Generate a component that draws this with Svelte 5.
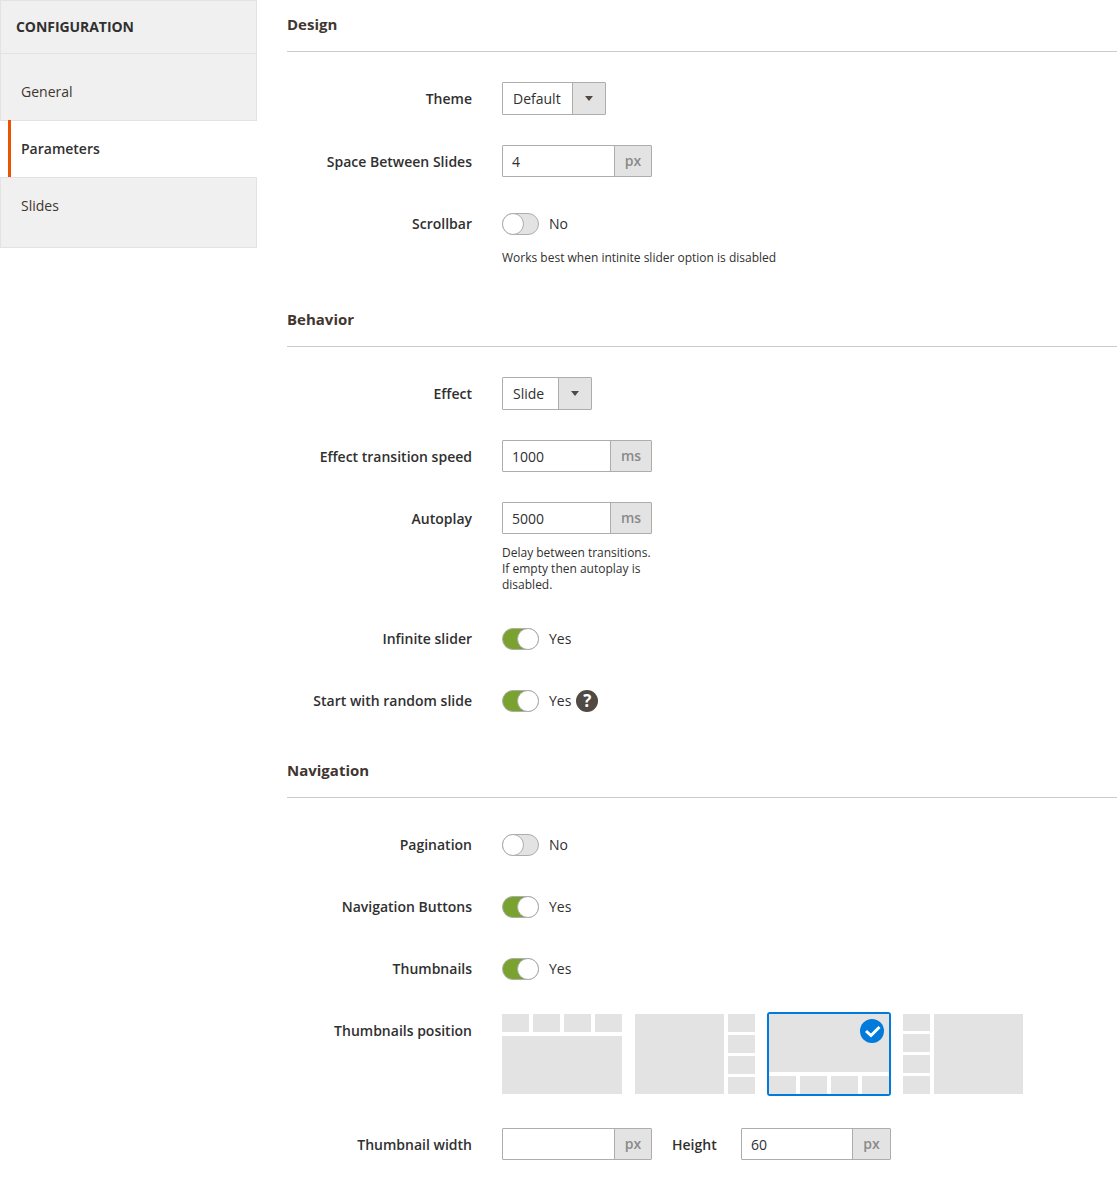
<script lang="ts">
    const thumbLayouts = ['top', 'right', 'bottom', 'left'];
    const selected = 'bottom';
    const items = [1, 2, 3, 4];
</script>

{#snippet toggle(on: boolean, help = false)}
    <div class="toggle-wrap">
        <span class="toggle" class:on><span class="knob"></span></span>
        <span class="toggle-label">{on ? 'Yes' : 'No'}</span>
        {#if help}<span class="help">?</span>{/if}
    </div>
{/snippet}

{#snippet select(value: string, cls: string)}
    <div class="select {cls}">
        <span class="select-value">{value}</span>
        <span class="select-btn"><span class="arrow"></span></span>
    </div>
{/snippet}

{#snippet addon(value: string, unit: string, cls = '')}
    <div class="addon {cls}">
        <input type="text" {value} />
        <span class="unit">{unit}</span>
    </div>
{/snippet}

<div class="page">
    <aside class="side">
        <div class="side-head">CONFIGURATION</div>
        <div class="tab first">General</div>
        <div class="tab active">Parameters</div>
        <div class="tab last">Slides</div>
    </aside>

    <main class="main">
        <section>
            <h2>Design</h2>
            <div class="row">
                <div class="label">Theme</div>
                <div class="ctrl">{@render select('Default', 'w-theme')}</div>
            </div>
            <div class="row">
                <div class="label">Space Between Slides</div>
                <div class="ctrl">{@render addon('4', 'px')}</div>
            </div>
            <div class="row">
                <div class="label">Scrollbar</div>
                <div class="ctrl">
                    {@render toggle(false)}
                    <div class="note nowrap">Works best when intinite slider option is disabled</div>
                </div>
            </div>
        </section>

        <section>
            <h2>Behavior</h2>
            <div class="row">
                <div class="label">Effect</div>
                <div class="ctrl">{@render select('Slide', 'w-effect')}</div>
            </div>
            <div class="row">
                <div class="label">Effect transition speed</div>
                <div class="ctrl">{@render addon('1000', 'ms', 'ms')}</div>
            </div>
            <div class="row">
                <div class="label">Autoplay</div>
                <div class="ctrl">
                    {@render addon('5000', 'ms', 'ms')}
                    <div class="note">Delay between transitions. If empty then autoplay is disabled.</div>
                </div>
            </div>
            <div class="row">
                <div class="label">Infinite slider</div>
                <div class="ctrl">{@render toggle(true)}</div>
            </div>
            <div class="row">
                <div class="label">Start with random slide</div>
                <div class="ctrl">{@render toggle(true, true)}</div>
            </div>
        </section>

        <section>
            <h2>Navigation</h2>
            <div class="row">
                <div class="label">Pagination</div>
                <div class="ctrl">{@render toggle(false)}</div>
            </div>
            <div class="row">
                <div class="label">Navigation Buttons</div>
                <div class="ctrl">{@render toggle(true)}</div>
            </div>
            <div class="row">
                <div class="label">Thumbnails</div>
                <div class="ctrl">{@render toggle(true)}</div>
            </div>
            <div class="row thumbs-row">
                <div class="label">Thumbnails position</div>
                <div class="ctrl thumbs">
                    {#each thumbLayouts as t}
                        <div class="thumb {t}" class:selected={t === selected}>
                            <div class="big"></div>
                            <div class="small">
                                {#each items as i}<span data-i={i}></span>{/each}
                            </div>
                            {#if t === selected}
                                <span class="check">
                                    <svg viewBox="0 0 24 24" width="24" height="24" aria-hidden="true">
                                        <path d="M6 12l5 4.500 8.500-8.500" fill="none" stroke="#fff" stroke-width="3"/>
                                    </svg>
                                </span>
                            {/if}
                        </div>
                    {/each}
                </div>
            </div>
            <div class="row">
                <div class="label">Thumbnail width</div>
                <div class="ctrl size">
                    {@render addon('', 'px')}
                    <div class="inline-label">Height</div>
                    {@render addon('60', 'px', 'wide')}
                </div>
            </div>
        </section>
    </main>
</div>

<style>
    :global(body){
        background:#fff;
        font-family:"Open Sans", sans-serif;
        font-size:14px;
        color:#303030;
    }

    .page{ display:flex; width:1117px; height:1198px; overflow:hidden; }

    /* sidebar */
    .side{ flex:0 0 257px; width:257px; }
    .side-head{
        height:52px; line-height:51px; padding-left:15px;
        background:#f0f0f0; border:1px solid #e3e3e3;
        font-weight:700; color:#303030; letter-spacing:-.06px;
    }
    .tab{
        background:#f0f0f0; border-right:1px solid #e3e3e3; border-left:1px solid #e3e3e3;
        padding-left:20px; color:#41362f;
    }
    .tab.first{ box-sizing:border-box; height:67px; line-height:76px; border-bottom:1px solid #e3e3e3; }
    .tab.active{
        position:relative; box-sizing:border-box;
        height:57px; line-height:58px; background:#fff; margin:-1px 0 0 8px;
        border:0; border-left:3px solid #eb5202; padding-left:10px;
        box-shadow:inset 0 1px 0 #e3e3e3;
        font-weight:600; color:#303030;
    }
    .tab.last{
        box-sizing:border-box; height:71px; line-height:56px;
        border-top:1px solid #e3e3e3; border-bottom:1px solid #e3e3e3;
    }

    /* content */
    .main{ flex:1; padding-left:30px; min-width:0; }
    h2{
        margin:0 0 30px; height:51px; line-height:49px;
        border-bottom:1px solid #cccccc;
        font-size:15px; font-weight:700; color:#41362f;
    }
    .row{ display:flex; margin-bottom:30px; }
    .label{
        width:185px; margin-right:30px; padding-top:7px;
        line-height:20px; text-align:right; font-weight:600; color:#303030;
    }
    .ctrl{ min-height:32px; }

    .select{
        display:flex; box-sizing:border-box; height:33px;
        border:1px solid #adadad; border-radius:1px; background:#fff;
    }
    .w-theme{ width:104px; }
    .w-effect{ width:90px; }
    .select-value{ flex:1; padding-left:10px; line-height:32px; }
    .select-btn{
        flex:0 0 32px; display:grid; place-items:center;
        background:#e3e3e3; border-left:1px solid #adadad;
    }
    .arrow{
        width:0; height:0;
        border-left:4px solid transparent; border-right:4px solid transparent;
        border-top:5px solid #514943;
    }

    .addon{
        display:flex; box-sizing:border-box; width:150px; height:32px;
        border:1px solid #adadad; border-radius:1px; background:#fff;
    }
    .addon input{
        flex:1; min-width:0; border:0; outline:0; padding:0 9px; margin:0;
        font:inherit; color:#303030; background:transparent;
    }
    .unit{
        flex:0 0 36px; text-align:center; line-height:30px;
        background:#e3e3e3; border-left:1px solid #adadad;
        color:#8a8a8a; font-weight:600;
    }
    .addon.ms .unit{ flex-basis:40px; }
    .addon.wide .unit{ flex-basis:37px; }

    .note{
        width:150px; margin:11px 0 -1px;
        font-size:12px; line-height:16px; color:#303030;
    }
    .note.nowrap{ width:auto; white-space:nowrap; }

    .toggle-wrap{ display:flex; align-items:center; box-sizing:border-box; height:32px; padding:6px 0 4px; }
    .toggle{
        position:relative; display:block; box-sizing:border-box;
        width:37px; height:22px; border-radius:11px;
        background:#e3e3e3; border:1px solid #adadad;
    }
    .toggle.on{ background:#79a22e; }
    .knob{
        position:absolute; left:-1px; top:-1px; box-sizing:border-box;
        width:22px; height:22px; border-radius:50%;
        background:#fff; border:1px solid #adadad;
    }
    .toggle.on .knob{ left:14px; }
    .toggle-label{ margin-left:10px; margin-top:-2px; color:#303030; }
    .help{
        width:22px; height:22px; margin-left:5px; border-radius:50%;
        background:#514943; color:#fff; text-align:center;
        font-size:17px; line-height:22px; font-weight:700;
    }

    /* thumbnails */
    .thumbs-row{ margin-bottom:34px; }
    .thumbs{ display:flex; gap:10px; margin-left:-2px; margin-top:-2px; margin-bottom:-2px; }
    .thumb{
        position:relative; display:flex; gap:4px; box-sizing:border-box;
        width:124px; height:84px; border:2px solid transparent; border-radius:3px;
    }
    .thumb.selected{ border-color:#007bdb; }
    .big{ background:#e3e3e3; flex:1; }
    .small{ display:flex; gap:4px; }
    .small span{ flex:1; background:#e3e3e3; }
    .thumb.top{ flex-direction:column-reverse; margin-right:-1px; }
    .thumb.top .small, .thumb.bottom .small{ height:18px; }
    .thumb.bottom{ flex-direction:column; }
    .thumb.right{ flex-direction:row; }
    .thumb.left{ flex-direction:row-reverse; }
    .thumb.right .small, .thumb.left .small{ flex:0 0 27px; flex-direction:column; gap:3px; }
    .thumb.right .small span, .thumb.left .small span{ flex:none; height:18px; }
    .thumb.right .small span:last-child, .thumb.left .small span:first-child{ height:17px; }
    .check{
        position:absolute; right:5px; top:5px; width:24px; height:24px;
        border-radius:50%; background:#007bdb; display:block;
    }
    .check svg{ display:block; }

    .size{ display:flex; align-items:flex-start; }
    .inline-label{ width:89px; padding-left:20px; box-sizing:border-box; padding-top:7px; line-height:20px; font-weight:600; }
</style>
